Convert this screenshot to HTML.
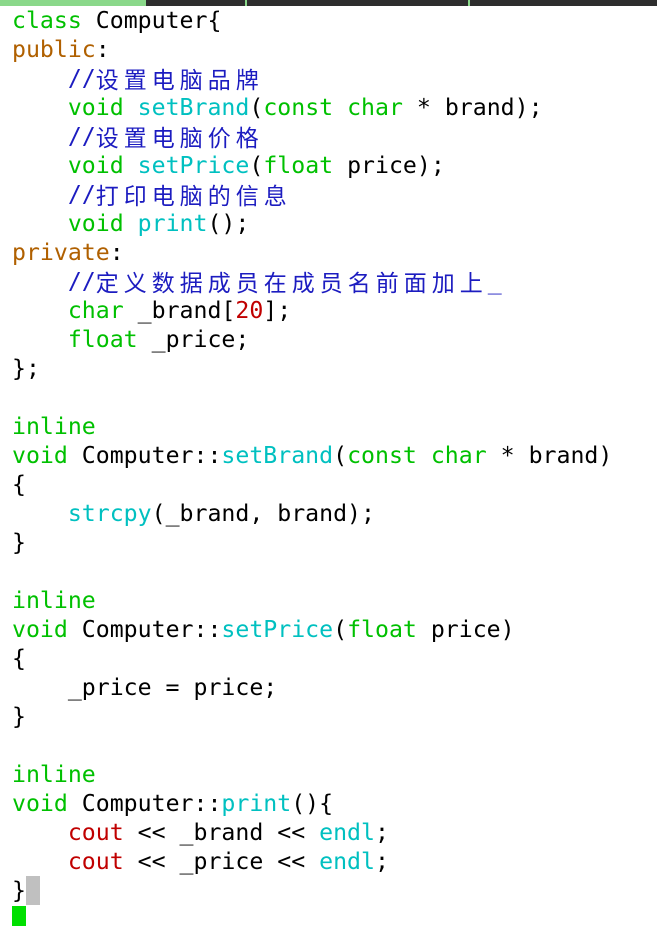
<!DOCTYPE html>
<html><head><meta charset="utf-8"><style>
html,body{margin:0;padding:0;background:#fff;width:657px;height:926px;overflow:hidden}
.bar{position:absolute;top:0;left:0;width:657px;height:6px;background:#2e2e2e}
.bar .g{position:absolute;top:0;left:0;width:146px;height:6px;background:#8ad88a}
.bar .m{position:absolute;top:0;width:2px;height:6px;background:#8ad88a}
#code{position:absolute;top:6px;left:12px;font-family:"DejaVu Sans Mono","Liberation Mono",monospace;font-size:23.2px;color:#000}
#code div{height:29px;line-height:29px;white-space:pre;overflow:visible}
.k{color:#00c000}.f{color:#00c0c0}.b{color:#b06000}.r{color:#c00000}
.c{color:#1c1cc0}
.cj i{font-style:normal;display:inline-block;width:28px;font-family:"Noto Sans CJK SC","WenQuanYi Zen Hei",sans-serif;font-size:23px;line-height:29px;height:29px;vertical-align:top}
.cur{background:#c0c0c0;display:inline-block;width:14px;height:29px;vertical-align:top}
.gc{position:absolute;left:12px;top:906px;width:14px;height:20px;background:#00e000}
</style></head><body>
<div class="bar"><div class="g"></div><div class="m" style="left:245px"></div><div class="m" style="left:468px"></div></div>
<div id="code">
<div><span class="k">class</span> Computer{</div>
<div><span class="b">public</span>:</div>
<div>    <span class="c">//<span class="cj"><i>设</i><i>置</i><i>电</i><i>脑</i><i>品</i><i>牌</i></span></span></div>
<div>    <span class="k">void</span> <span class="f">setBrand</span>(<span class="k">const</span> <span class="k">char</span> * brand);</div>
<div>    <span class="c">//<span class="cj"><i>设</i><i>置</i><i>电</i><i>脑</i><i>价</i><i>格</i></span></span></div>
<div>    <span class="k">void</span> <span class="f">setPrice</span>(<span class="k">float</span> price);</div>
<div>    <span class="c">//<span class="cj"><i>打</i><i>印</i><i>电</i><i>脑</i><i>的</i><i>信</i><i>息</i></span></span></div>
<div>    <span class="k">void</span> <span class="f">print</span>();</div>
<div><span class="b">private</span>:</div>
<div>    <span class="c">//<span class="cj"><i>定</i><i>义</i><i>数</i><i>据</i><i>成</i><i>员</i><i>在</i><i>成</i><i>员</i><i>名</i><i>前</i><i>面</i><i>加</i><i>上</i></span>_</span></div>
<div>    <span class="k">char</span> _brand[<span class="r">20</span>];</div>
<div>    <span class="k">float</span> _price;</div>
<div>};</div>
<div> </div>
<div><span class="k">inline</span></div>
<div><span class="k">void</span> Computer::<span class="f">setBrand</span>(<span class="k">const</span> <span class="k">char</span> * brand)</div>
<div>{</div>
<div>    <span class="f">strcpy</span>(_brand, brand);</div>
<div>}</div>
<div> </div>
<div><span class="k">inline</span></div>
<div><span class="k">void</span> Computer::<span class="f">setPrice</span>(<span class="k">float</span> price)</div>
<div>{</div>
<div>    _price = price;</div>
<div>}</div>
<div> </div>
<div><span class="k">inline</span></div>
<div><span class="k">void</span> Computer::<span class="f">print</span>(){</div>
<div>    <span class="r">cout</span> &lt;&lt; _brand &lt;&lt; <span class="f">endl</span>;</div>
<div>    <span class="r">cout</span> &lt;&lt; _price &lt;&lt; <span class="f">endl</span>;</div>
<div>}<span class="cur"></span></div>
</div>
<div class="gc"></div>
</body></html>
